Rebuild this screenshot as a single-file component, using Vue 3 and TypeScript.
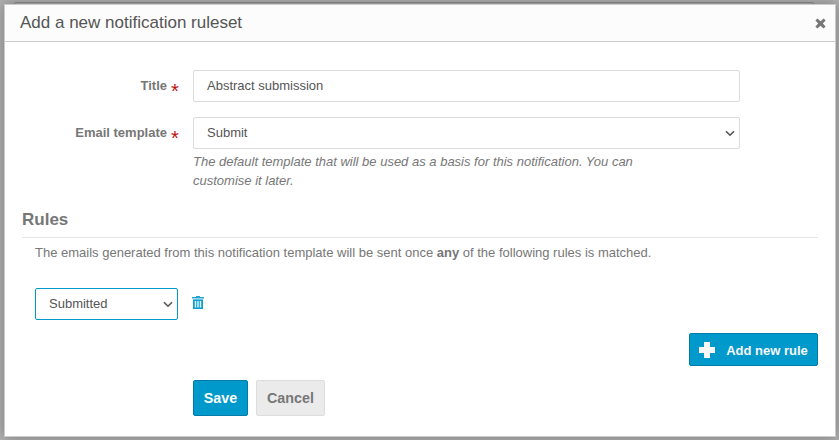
<script setup lang="ts">
import { ref } from 'vue'

const title = ref<string>('Abstract submission')
const template = ref<string>('Submit')
const rules = ref<string[]>(['Submitted'])

function addRule(): void {
  rules.value.push('Submitted')
}
function removeRule(index: number): void {
  rules.value.splice(index, 1)
}
</script>

<template>
  <div class="backdrop">
    <div class="page-edge"></div>
    <section class="dialog" role="dialog">
      <header class="dialog-header">
        <h1>Add a new notification ruleset</h1>
        <button class="close" type="button" aria-label="Close">
          <svg width="11" height="11" viewBox="0 0 11 11">
            <path d="M2.4 0.4 5.5 3.2 8.6 0.4 10.6 2.4 7.8 5.5 10.6 8.6 8.6 10.6 5.5 7.8 2.4 10.6 0.4 8.6 3.2 5.5 0.4 2.4Z" fill="#777" />
          </svg>
        </button>
      </header>
      <form class="dialog-body" @submit.prevent>
        <div class="field">
          <label for="title">Title<span class="required">*</span></label>
          <input id="title" v-model="title" class="control" type="text" />
        </div>
        <div class="field template-field">
          <label for="template">Email template<span class="required">*</span></label>
          <div class="control-group">
            <select id="template" v-model="template" class="control">
              <option>Submit</option>
            </select>
            <p class="hint">The default template that will be used as a basis for this notification. You can customise it later.</p>
          </div>
        </div>
        <h2>Rules</h2>
        <p class="explain">The emails generated from this notification template will be sent once <strong>any</strong> of the following rules is matched.</p>
        <div class="rules">
          <div v-for="(_, i) in rules" :key="i" class="rule">
            <select v-model="rules[i]" class="control active">
              <option>Submitted</option>
            </select>
            <button class="trash" type="button" aria-label="Remove rule" @click="removeRule(i)">
              <svg width="12" height="14" viewBox="0 0 12 14">
                <path d="M4 0h4v1h4v1.6H0V1h4Z" fill="#26a5d3" />
                <path d="M1 3.4h10V13H1Z" fill="#0d9fce" />
                <path d="M3.5 5v6.5M6 5v6.5M8.5 5v6.5" stroke="#d5eef8" stroke-width="1.5" />
              </svg>
            </button>
          </div>
        </div>
        <div class="add-row">
          <button class="button primary add" type="button" @click="addRule">
            <svg width="16" height="16" viewBox="0 0 16 16"><path d="M5 0h6v5h5v6h-5v5H5v-5H0V5h5Z" fill="#f8f8f8" /></svg>
            <span>Add new rule</span>
          </button>
        </div>
        <div class="actions">
          <button class="button primary save" type="submit">Save</button>
          <button class="button cancel" type="button">Cancel</button>
        </div>
      </form>
    </section>
  </div>
</template>

<style>
body {
  margin: 0;
  overflow: hidden;
}
</style>

<style scoped>
* {
  box-sizing: border-box;
}
.backdrop {
  position: relative;
  height: 440px;
  padding: 4px 3px 3px 4px;
  background: #b0b0b0;
  overflow: hidden;
  font: 13px/19px "Liberation Sans", Arial, sans-serif;
  color: #777;
}
.page-edge {
  position: absolute;
  top: 2px;
  left: 14px;
  width: 800px;
  height: 8px;
  border: 1px solid #8c8c8c;
  border-radius: 2px;
}
.dialog {
  position: relative;
  height: 433px;
  background: #fff;
  border: 1px solid #ccc;
  box-shadow: 0 0 12px rgba(0, 0, 0, 0.3);
}
.dialog-header {
  display: flex;
  align-items: center;
  justify-content: space-between;
  height: 37px;
  padding: 0 9px 0 15px;
  background: #fcfcfc;
  border-bottom: 1px solid #ccc;
}
h1 {
  margin: 0;
  font-size: 17px;
  line-height: 20px;
  font-weight: normal;
  color: #555;
}
.close,
.trash {
  display: flex;
  padding: 0;
  border: 0;
  background: none;
}
.close {
  margin-top: 1px;
}
.dialog-body {
  padding: 28px 17px 0;
}
.field {
  display: flex;
  margin-bottom: 15px;
}
.template-field {
  margin-bottom: 19px;
}
label {
  display: flex;
  justify-content: flex-end;
  width: 157px;
  margin-right: 14px;
  padding-top: 6px;
  font-weight: bold;
}
.required {
  width: 8px;
  height: 19px;
  margin: 6px 0 0 4px;
  font-size: 20px;
  font-weight: normal;
  color: #b11;
}
.control {
  width: 547px;
  height: 32px;
  margin: 0;
  padding: 0 13px 1px;
  border: 1px solid #dcdcdc;
  border-radius: 2px;
  outline: 0;
  background: #fff;
  font: inherit;
  color: #555;
}
select.control {
  display: block;
  appearance: none;
  background: #fff url("data:image/svg+xml,%3Csvg xmlns='http://www.w3.org/2000/svg' width='10' height='7'%3E%3Cpath d='M1 1.2 5 5.2 9 1.2' fill='none' stroke='%23555' stroke-width='1.6'/%3E%3C/svg%3E") no-repeat right 4px top 12px;
}
.hint {
  width: 460px;
  margin: 3px 0 0;
  font-style: italic;
}
h2 {
  height: 29px;
  margin: 0;
  border-bottom: 1px solid #e5e5e5;
  font-size: 17px;
  line-height: 22px;
}
.explain {
  margin: 5px 13px 26px;
}
.rules {
  padding-left: 13px;
}
.rule {
  display: flex;
}
select.control.active {
  width: 143px;
  border-color: #0099cc;
}
.trash {
  margin: 8px 0 0 14px;
}
.add-row {
  display: flex;
  justify-content: flex-end;
  margin-top: 13px;
}
.button {
  display: flex;
  align-items: center;
  justify-content: center;
  padding: 0;
  border: 1px solid #ddd;
  border-radius: 2px;
  font: bold 14.3px/18px "Liberation Sans", Arial, sans-serif;
}
.primary {
  background: #0099cc;
  border-color: #007cab;
  color: #fff;
}
.add {
  gap: 11px;
  width: 129px;
  height: 33px;
  font-size: 13px;
  color: #f8f8f8;
}
.add span {
  margin-top: 2px;
}
.actions {
  display: flex;
  gap: 8px;
  margin: 14px 0 0 171px;
}
.save {
  width: 55px;
  height: 36px;
}
.cancel {
  width: 69px;
  height: 36px;
  background: #ebebeb;
  color: #777;
}
</style>
